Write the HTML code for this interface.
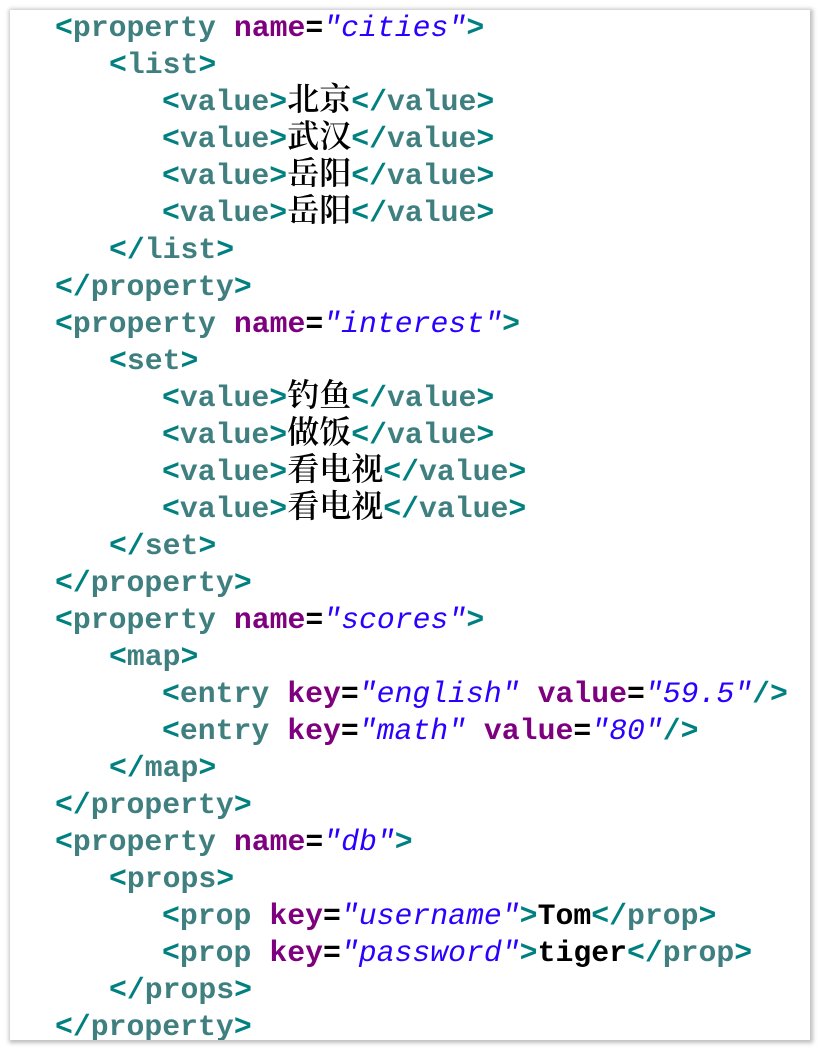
<!DOCTYPE html>
<html><head><meta charset="utf-8"><style>
body{margin:0;background:#fff;width:821px;height:1062px;overflow:hidden;position:relative}
.page{position:absolute;left:10px;top:10px;width:800px;height:1030px;background:#fff;box-shadow:1px 1px 4px 2px rgba(0,0,0,.25);overflow:hidden}
.l{position:absolute;left:0;white-space:pre;font-family:"Liberation Mono","Noto Sans CJK SC",monospace;font-weight:bold;font-size:29.8px;line-height:37px;height:37px;color:#000}
.b{color:#008080}.t{color:#3f7f7f}.a{color:#7f007f}.v{color:#2a00ff;font-style:italic;font-weight:normal}
.c{font-family:"Noto Serif CJK SC","Liberation Serif",serif;font-weight:600;line-height:0;font-size:32px}
</style></head><body>
<div class="page">
<div class="l" style="top:0;left:45px"><span class="b">&lt;</span><span class="t">property</span> <span class="a">name</span>=<span class="v">"cities"</span><span class="b">&gt;</span></div>
<div class="l" style="top:37px;left:99px"><span class="b">&lt;</span><span class="t">list</span><span class="b">&gt;</span></div>
<div class="l" style="top:74px;left:152px"><span class="b">&lt;</span><span class="t">value</span><span class="b">&gt;</span><span class="c">北京</span><span class="b">&lt;/</span><span class="t">value</span><span class="b">&gt;</span></div>
<div class="l" style="top:111px;left:152px"><span class="b">&lt;</span><span class="t">value</span><span class="b">&gt;</span><span class="c">武汉</span><span class="b">&lt;/</span><span class="t">value</span><span class="b">&gt;</span></div>
<div class="l" style="top:148px;left:152px"><span class="b">&lt;</span><span class="t">value</span><span class="b">&gt;</span><span class="c">岳阳</span><span class="b">&lt;/</span><span class="t">value</span><span class="b">&gt;</span></div>
<div class="l" style="top:185px;left:152px"><span class="b">&lt;</span><span class="t">value</span><span class="b">&gt;</span><span class="c">岳阳</span><span class="b">&lt;/</span><span class="t">value</span><span class="b">&gt;</span></div>
<div class="l" style="top:222px;left:99px"><span class="b">&lt;/</span><span class="t">list</span><span class="b">&gt;</span></div>
<div class="l" style="top:259px;left:45px"><span class="b">&lt;/</span><span class="t">property</span><span class="b">&gt;</span></div>
<div class="l" style="top:296px;left:45px"><span class="b">&lt;</span><span class="t">property</span> <span class="a">name</span>=<span class="v">"interest"</span><span class="b">&gt;</span></div>
<div class="l" style="top:333px;left:99px"><span class="b">&lt;</span><span class="t">set</span><span class="b">&gt;</span></div>
<div class="l" style="top:370px;left:152px"><span class="b">&lt;</span><span class="t">value</span><span class="b">&gt;</span><span class="c">钓鱼</span><span class="b">&lt;/</span><span class="t">value</span><span class="b">&gt;</span></div>
<div class="l" style="top:407px;left:152px"><span class="b">&lt;</span><span class="t">value</span><span class="b">&gt;</span><span class="c">做饭</span><span class="b">&lt;/</span><span class="t">value</span><span class="b">&gt;</span></div>
<div class="l" style="top:444px;left:152px"><span class="b">&lt;</span><span class="t">value</span><span class="b">&gt;</span><span class="c">看电视</span><span class="b">&lt;/</span><span class="t">value</span><span class="b">&gt;</span></div>
<div class="l" style="top:481px;left:152px"><span class="b">&lt;</span><span class="t">value</span><span class="b">&gt;</span><span class="c">看电视</span><span class="b">&lt;/</span><span class="t">value</span><span class="b">&gt;</span></div>
<div class="l" style="top:518px;left:99px"><span class="b">&lt;/</span><span class="t">set</span><span class="b">&gt;</span></div>
<div class="l" style="top:555px;left:45px"><span class="b">&lt;/</span><span class="t">property</span><span class="b">&gt;</span></div>
<div class="l" style="top:592px;left:45px"><span class="b">&lt;</span><span class="t">property</span> <span class="a">name</span>=<span class="v">"scores"</span><span class="b">&gt;</span></div>
<div class="l" style="top:629px;left:99px"><span class="b">&lt;</span><span class="t">map</span><span class="b">&gt;</span></div>
<div class="l" style="top:666px;left:152px"><span class="b">&lt;</span><span class="t">entry</span> <span class="a">key</span>=<span class="v">"english"</span> <span class="a">value</span>=<span class="v">"59.5"</span><span class="b">/&gt;</span></div>
<div class="l" style="top:703px;left:152px"><span class="b">&lt;</span><span class="t">entry</span> <span class="a">key</span>=<span class="v">"math"</span> <span class="a">value</span>=<span class="v">"80"</span><span class="b">/&gt;</span></div>
<div class="l" style="top:740px;left:99px"><span class="b">&lt;/</span><span class="t">map</span><span class="b">&gt;</span></div>
<div class="l" style="top:777px;left:45px"><span class="b">&lt;/</span><span class="t">property</span><span class="b">&gt;</span></div>
<div class="l" style="top:814px;left:45px"><span class="b">&lt;</span><span class="t">property</span> <span class="a">name</span>=<span class="v">"db"</span><span class="b">&gt;</span></div>
<div class="l" style="top:851px;left:99px"><span class="b">&lt;</span><span class="t">props</span><span class="b">&gt;</span></div>
<div class="l" style="top:888px;left:152px"><span class="b">&lt;</span><span class="t">prop</span> <span class="a">key</span>=<span class="v">"username"</span><span class="b">&gt;</span>Tom<span class="b">&lt;/</span><span class="t">prop</span><span class="b">&gt;</span></div>
<div class="l" style="top:925px;left:152px"><span class="b">&lt;</span><span class="t">prop</span> <span class="a">key</span>=<span class="v">"password"</span><span class="b">&gt;</span>tiger<span class="b">&lt;/</span><span class="t">prop</span><span class="b">&gt;</span></div>
<div class="l" style="top:962px;left:99px"><span class="b">&lt;/</span><span class="t">props</span><span class="b">&gt;</span></div>
<div class="l" style="top:999px;left:45px"><span class="b">&lt;/</span><span class="t">property</span><span class="b">&gt;</span></div>
</div>
</body></html>
